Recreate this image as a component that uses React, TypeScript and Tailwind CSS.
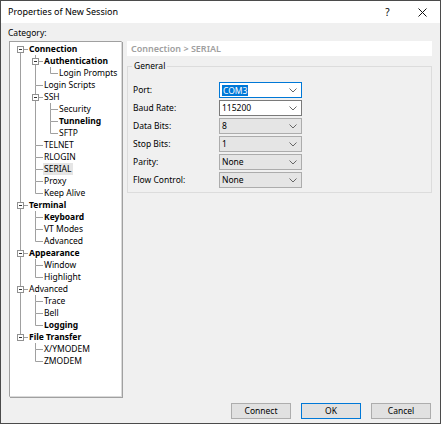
import React from "react";

type Node = { label: string; bold?: boolean; selected?: boolean; children?: Node[] };

const tree: Node[] = [
  {
    label: "Connection",
    bold: true,
    children: [
      { label: "Authentication", bold: true, children: [{ label: "Login Prompts" }] },
      { label: "Login Scripts" },
      {
        label: "SSH",
        children: [{ label: "Security" }, { label: "Tunneling", bold: true }, { label: "SFTP" }],
      },
      { label: "TELNET" },
      { label: "RLOGIN" },
      { label: "SERIAL", selected: true },
      { label: "Proxy" },
      { label: "Keep Alive" },
    ],
  },
  {
    label: "Terminal",
    bold: true,
    children: [{ label: "Keyboard", bold: true }, { label: "VT Modes" }, { label: "Advanced" }],
  },
  { label: "Appearance", bold: true, children: [{ label: "Window" }, { label: "Highlight" }] },
  { label: "Advanced", children: [{ label: "Trace" }, { label: "Bell" }, { label: "Logging", bold: true }] },
  { label: "File Transfer", bold: true, children: [{ label: "X/YMODEM" }, { label: "ZMODEM" }] },
];

type Row = {
  node: Node;
  trail: boolean[]; // does each ancestor have a following sibling
  hasNext: boolean;
  first: boolean;
};

function flatten(nodes: Node[], trail: boolean[], out: Row[]) {
  nodes.forEach((n, i) => {
    out.push({ node: n, trail, hasNext: i < nodes.length - 1, first: trail.length === 0 && i === 0 });
    if (n.children) flatten(n.children, [...trail, i < nodes.length - 1], out);
  });
  return out;
}

const LINE = "#a0a0a0";

function Gutter({ through }: { through: boolean }) {
  return (
    <svg width="15" height="12" className="shrink-0">
      {through && <line x1="7.5" y1="0" x2="7.5" y2="12" stroke={LINE} />}
    </svg>
  );
}

function Joint({ row }: { row: Row }) {
  const box = !!row.node.children;
  return (
    <svg width="15" height="12" className="shrink-0">
      {!row.first && <line x1="7.5" y1="0" x2="7.5" y2="6.5" stroke={LINE} />}
      {row.hasNext && <line x1="7.5" y1="6.5" x2="7.5" y2="12" stroke={LINE} />}
      <line x1="7.5" y1="6.5" x2="15" y2="6.5" stroke={LINE} />
      {box && (
        <>
          <rect x="4.5" y="3.5" width="6" height="6" fill="#fff" stroke="#919191" />
          <line x1="6" y1="6.5" x2="9" y2="6.5" stroke="#333" />
        </>
      )}
    </svg>
  );
}

function Tree() {
  const rows = flatten(tree, [], []);
  return (
    <div className="w-[113px] h-[356px] bg-white border border-[#a0a0a0] border-r-[#dadada] border-b-[#dadada] shadow-[1px_1px_0_#a0a0a0] pl-[3px] pt-[1px]">
      {rows.map((r, i) => (
        <div key={i} className="flex h-[12px] items-center">
          {r.trail.map((t, j) => (
            <Gutter key={j} through={t} />
          ))}
          <Joint row={r} />
          <span
            className={`pl-[1px] pr-[2px] leading-[12px] whitespace-nowrap ${r.node.bold ? "font-bold" : ""} ${
              r.node.selected ? "bg-[#e5e5e5]" : ""
            }`}
          >
            {r.node.label}
          </span>
        </div>
      ))}
    </div>
  );
}

function Chevron() {
  return (
    <svg width="8" height="5" className="shrink-0">
      <polyline points="0.5,0.5 4,4 7.5,0.5" fill="none" stroke="#666" />
    </svg>
  );
}

function Combo({ value, variant }: { value: string; variant: "focus" | "edit" | "list" }) {
  const cls =
    variant === "focus"
      ? "bg-white border-[#0078d7]"
      : variant === "edit"
      ? "bg-white border-[#7a7a7a]"
      : "bg-[#e5e5e5] border-[#acacac]";
  return (
    <div className={`w-[83px] h-[16px] border ${cls} flex items-center justify-between pl-[2px] pr-[4px]`}>
      {variant === "focus" ? (
        <span className="bg-[#0078d7] text-white px-[1px] leading-[11px]">{value}</span>
      ) : (
        <span className="leading-[12px]">{value}</span>
      )}
      <Chevron />
    </div>
  );
}

const fields: { label: string; value: string; variant: "focus" | "edit" | "list" }[] = [
  { label: "Port:", value: "COM3", variant: "focus" },
  { label: "Baud Rate:", value: "115200", variant: "edit" },
  { label: "Data Bits:", value: "8", variant: "list" },
  { label: "Stop Bits:", value: "1", variant: "list" },
  { label: "Parity:", value: "None", variant: "list" },
  { label: "Flow Control:", value: "None", variant: "list" },
];

function Button({ label, primary }: { label: string; primary?: boolean }) {
  return (
    <div
      className={`w-[60px] h-[16px] flex items-center justify-center bg-[#e1e1e1] border ${
        primary ? "border-[#0078d7]" : "border-[#adadad]"
      }`}
    >
      {label}
    </div>
  );
}

export default function App() {
  return (
    <div
      className="w-[441px] h-[424px] border border-[#4b4b4b] bg-[#f0f0f0] flex flex-col text-[8.5px] text-black"
      style={{ fontFamily: '"Noto Sans", "Open Sans", sans-serif' }}
    >
      {/* Title bar */}
      <div className="h-[22px] bg-white flex items-center pl-[7px] shrink-0">
        <span className="text-[9px] flex-1">Properties of New Session</span>
        <span className="text-[10px] w-[35px] text-center">?</span>
        <svg width="9" height="9" className="mr-[13px] ml-[13px]">
          <line x1="0.5" y1="0.5" x2="8.5" y2="8.5" stroke="#111" />
          <line x1="8.5" y1="0.5" x2="0.5" y2="8.5" stroke="#111" />
        </svg>
      </div>

      <div className="flex-1 flex flex-col px-[8px]">
        <div className="flex gap-[5px]">
          <div className="flex flex-col">
            <div className="h-[12px] leading-[12px] mt-[4px] mb-[2px] -ml-[1px]">Category:</div>
            <Tree />
          </div>

          <div className="w-[305px] flex flex-col pt-[18px]">
            <div className="h-[15px] bg-white flex items-center pl-[4px] text-[9px] font-semibold text-[#a0a0a0]">
              Connection &gt; SERIAL
            </div>

            <div className="relative mt-[10px] h-[127px] border border-[#dcdcdc] pl-[5px] pt-[15px]">
              <span className="absolute -top-[7px] left-[4px] bg-[#f0f0f0] px-[2px] leading-[12px]">General</span>
              <div className="flex flex-col gap-[2px]">
                {fields.map((f) => (
                  <div key={f.label} className="flex items-center">
                    <span className="w-[86px]">{f.label}</span>
                    <Combo value={f.value} variant={f.variant} />
                  </div>
                ))}
              </div>
            </div>
          </div>
        </div>

        <div className="flex justify-end gap-[10px] mt-[6px] pr-[1px]">
          <Button label="Connect" />
          <Button label="OK" primary />
          <Button label="Cancel" />
        </div>
      </div>
    </div>
  );
}
